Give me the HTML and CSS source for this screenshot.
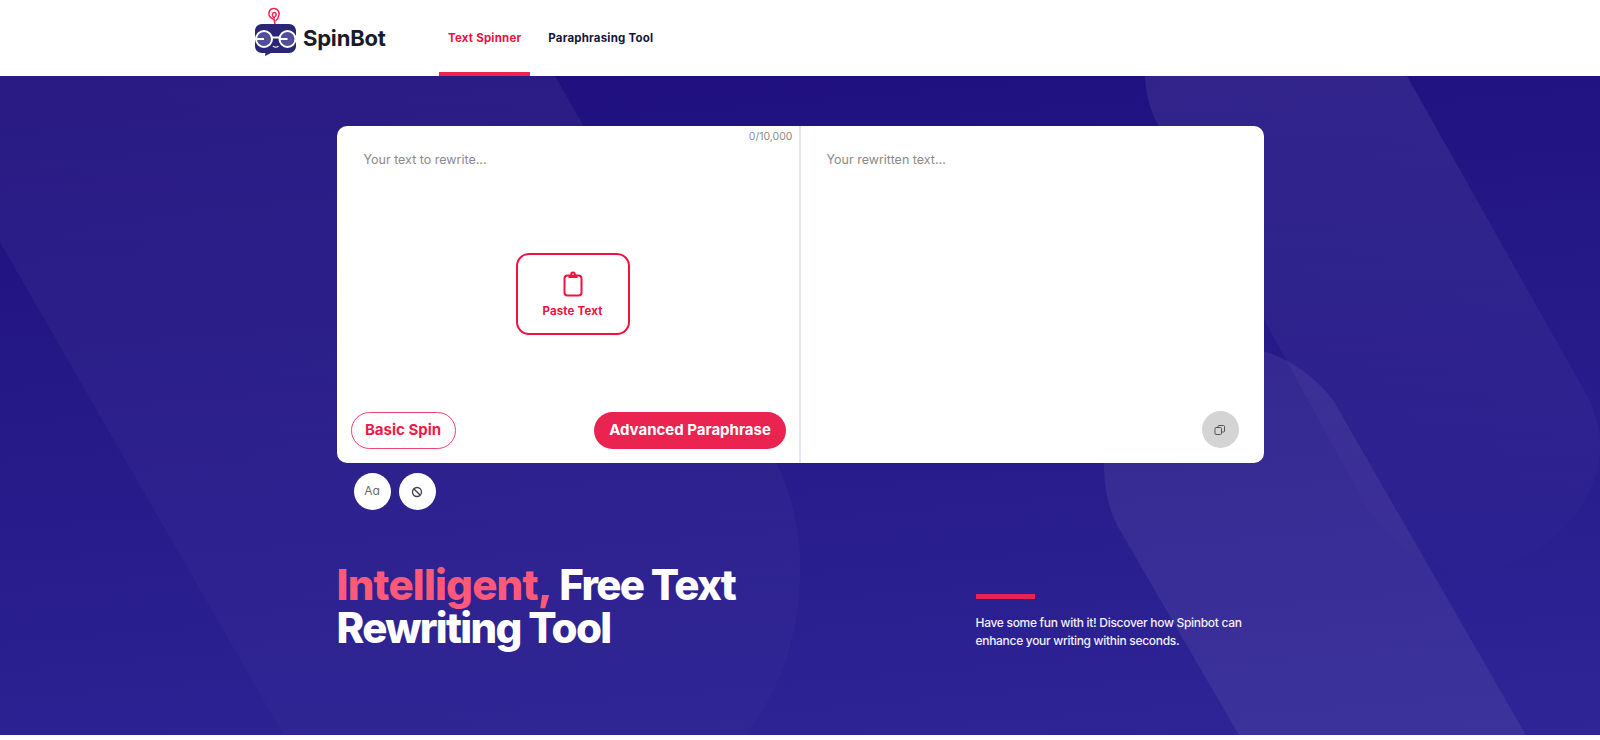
FILE: index.html
```html
<!DOCTYPE html>
<html lang="en">
<head>
  <meta charset="UTF-8">
  <meta name="viewport" content="width=device-width, initial-scale=1.0">
  <title>SpinBot - Text Spinner</title>
  <link rel="stylesheet" href="styles.css">
</head>
<body>
  <header class="topbar">
    <a href="#" class="logo">
      <svg class="logo-mark" viewBox="0 0 44 50" width="44" height="50">
        <path d="M21 18L20 13.500C16 12 14.500 9 15 6.500C15.500 3.500 18 2 20.500 2.500C24 3 25.500 6 25 9C24.500 12 23 14 21.500 15M21 12C19 11.500 18 9.500 18.500 8C19 6 21.500 6 22 8C22.300 9.500 21.500 10.500 20.500 10.500" stroke="#ef2350" stroke-width="1.500" fill="none"/>
        <path d="M8 18h27c4 0 7 3 7 7v15c0 4-3 7-7 7H17l-6 3 .5-3H8c-4 0-7-3-7-7V25c0-4 3-7 7-7z" fill="#2a2675"/>
        <circle cx="10" cy="33" r="8" fill="#524e99" stroke="#fff" stroke-width="2"/>
        <circle cx="33.500" cy="33" r="8" fill="#524e99" stroke="#fff" stroke-width="2"/>
        <path d="M18 31.500h8M2 33h8M25.500 33h8" stroke="#fff" stroke-width="2" fill="none"/>
        <path d="M19 40c1 1.500 4.500 1.500 5.500 0" stroke="#fff" stroke-width="1.300" fill="none"/>
      </svg>
      <span class="logo-name">SpinBot</span>
    </a>
    <nav class="tabs">
      <a href="#" class="tab active">Text Spinner</a>
      <a href="#" class="tab">Paraphrasing Tool</a>
    </nav>
  </header>

  <main class="hero">
    <!-- formas do fundo -->
    <svg class="hero-bg" viewBox="0 0 1600 659" width="1600" height="659" aria-hidden="true">
      <defs>
        <linearGradient id="fadeSoft" x1="0" y1="0" x2="0" y2="1">
          <stop offset="0" stop-color="#fff" stop-opacity="0.05"/>
          <stop offset="1" stop-color="#fff" stop-opacity="0.012"/>
        </linearGradient>
        <linearGradient id="fadeMid" x1="0" y1="0" x2="0" y2="1">
          <stop offset="0" stop-color="#fff" stop-opacity="0.075"/>
          <stop offset="1" stop-color="#fff" stop-opacity="0.004"/>
        </linearGradient>
      </defs>
      <path fill="url(#fadeSoft)" d="M0 166L285 661H743C785 610 800 550 800 491C800 450 790 415 778 391L555 0H0Z"/>
      <path fill="url(#fadeMid)" d="M1145 0C1146 19 1150 34 1158 49L1367 432C1395 470 1430 494 1467 494C1540 494 1600 430 1600 370C1600 350 1597 345 1590 325L1407 0Z"/>
      <path class="shape-strong" d="M1240 661L1117 449C1108 432 1104 410 1104 389C1104 320 1165 272 1240 272C1275 272 1310 295 1333 324L1527 661Z"/>
    </svg>

    <section class="card">
      <div class="panel panel-left">
        <div class="counter"><span class="counter-num">0</span>/10,000</div>
        <div class="placeholder">Your text to rewrite...</div>
        <button class="paste">
          <svg viewBox="0 0 20 26" width="20" height="26" fill="none" stroke="#f0123f" stroke-width="2">
            <rect x="1.500" y="4.500" width="17" height="20" rx="3"/>
            <path d="M5.500 5.500h9" stroke-width="3"/>
            <circle cx="10" cy="3.200" r="1.800" fill="#fff"/>
          </svg>
          <span>Paste Text</span>
        </button>
        <div class="actions">
          <button class="pill pill-outline">Basic Spin</button>
          <button class="pill pill-fill">Advanced Paraphrase</button>
        </div>
      </div>
      <div class="panel panel-right">
        <div class="placeholder">Your rewritten text...</div>
        <button class="round round-grey">
          <svg viewBox="0 0 12 12" width="12" height="12" fill="none" stroke="#555" stroke-width="1">
            <rect x="1" y="3.500" width="6.500" height="7" rx="1"/>
            <path d="M4 3.500V2.500a1 1 0 0 1 1-1h4.500a1 1 0 0 1 1 1v4.500a1 1 0 0 1-1 1h-2"/>
          </svg>
        </button>
      </div>
    </section>

    <div class="tools">
      <button class="round round-text">Aa</button>
      <button class="round">
        <svg viewBox="0 0 12 12" width="12" height="12" fill="none" stroke="#3a3a4a" stroke-width="1.300">
          <circle cx="6" cy="6" r="4.500"/>
          <path d="M2.800 2.800l6.400 6.400"/>
        </svg>
      </button>
    </div>

    <section class="intro">
      <h1 class="headline"><span class="pink">Intelligent,</span> Free Text<br>Rewriting Tool</h1>
      <div class="blurb">
        <div class="blurb-bar"></div>
        <p>Have some fun with it! Discover how Spinbot can enhance your writing within seconds.</p>
      </div>
    </section>
  </main>
</body>
</html>
```

FILE: styles.css
```css
body { margin: 0; background: #fff; font-family: Inter, "Noto Sans", sans-serif; color: #16163a; }
a { text-decoration: none; color: inherit; }
button { font-family: inherit; cursor: pointer; }

.topbar { height: 76px; display: flex; padding-left: 254px; background: #fff; }
.logo { display: flex; align-items: center; width: 185px; }
.logo-mark { margin-top: -14px; flex: none; }
.logo-name { margin-left: 5px; font-size: 22px; font-weight: 700; letter-spacing: -0.2px; color: #1a1a2a; }
.tabs { display: flex; gap: 9px; }
.tab { display: flex; align-items: center; height: 76px; padding: 4px 9px 0; border-bottom: 4px solid transparent; box-sizing: border-box; font-size: 11.5px; font-weight: 700; letter-spacing: 0.2px; }
.tab.active { color: #f0123f; border-bottom-color: #ef2350; }

.hero { position: relative; height: 659px; overflow: hidden; background: linear-gradient(175deg, #1e0f7d 0%, #2f2596 100%); }
.hero-bg { position: absolute; top: 0; left: 0; }
.shape-strong { fill: #fff; opacity: 0.065; }

.card { position: relative; display: flex; width: 927px; height: 337px; margin: 50px auto 0; background: #fff; border-radius: 10px; }
.panel { display: flex; flex-direction: column; box-sizing: border-box; }
.panel-left { width: 464px; border-right: 2px solid #e0e8f8; }
.panel-right { flex: 1; padding: 25px 25px 15px 26px; }
.counter { margin-top: 4px; padding-right: 6px; text-align: right; font-size: 10.5px; line-height: 13px; color: #8a8a8a; }
.counter-num { color: #8a86e6; }
.placeholder { font-size: 12.5px; line-height: 18px; color: #8a8a8a; }
.panel-left .placeholder { margin: 8px 0 0 27px; }
.paste { display: flex; flex-direction: column; align-items: center; width: 114px; height: 82px; margin: 84px 0 0 179px; padding: 16px 0 0; background: #fff; border: 2px solid #f0123f; border-radius: 13px; color: #f0123f; font-size: 11.5px; font-weight: 700; letter-spacing: 0.15px; }
.paste span { margin-top: 7px; }
.actions { display: flex; justify-content: space-between; margin-top: auto; padding: 0 12.5px 14px 14px; }
.pill { height: 37px; padding: 0 0 2px; border-radius: 19px; font-size: 15px; font-weight: 700; }
.pill-outline { width: 105px; background: #fff; border: 1px solid #f0446a; color: #ee1a4a; }
.pill-fill { width: 192px; background: #ea2350; border: none; color: #fff; }

.round { display: flex; align-items: center; justify-content: center; width: 37px; height: 37px; padding: 0; background: #fff; border: none; border-radius: 50%; font-size: 11px; color: #666; }
.round-text { padding-bottom: 2px; font-size: 12px; font-feature-settings: "cv11"; }
.round-grey { margin-top: auto; align-self: flex-end; background: #d4d4d4; }
.tools { display: flex; gap: 8px; width: 910px; margin: 10px auto 0; padding-left: 17px; }

.intro { display: flex; justify-content: space-between; width: 927px; margin: 53px auto 0; }
.headline { margin: 0; font-size: 42px; line-height: 43px; font-weight: 800; letter-spacing: -1.7px; color: #fff; }
.pink { color: #ff5577; letter-spacing: -0.8px; }
.blurb { width: 288px; padding-top: 31px; }
.blurb-bar { width: 59px; height: 5px; background: #e8234f; }
.blurb p { margin: 15px 0 0; font-size: 12px; line-height: 18px; font-weight: 500; letter-spacing: -0.3px; color: #f0f0ff; }
```
